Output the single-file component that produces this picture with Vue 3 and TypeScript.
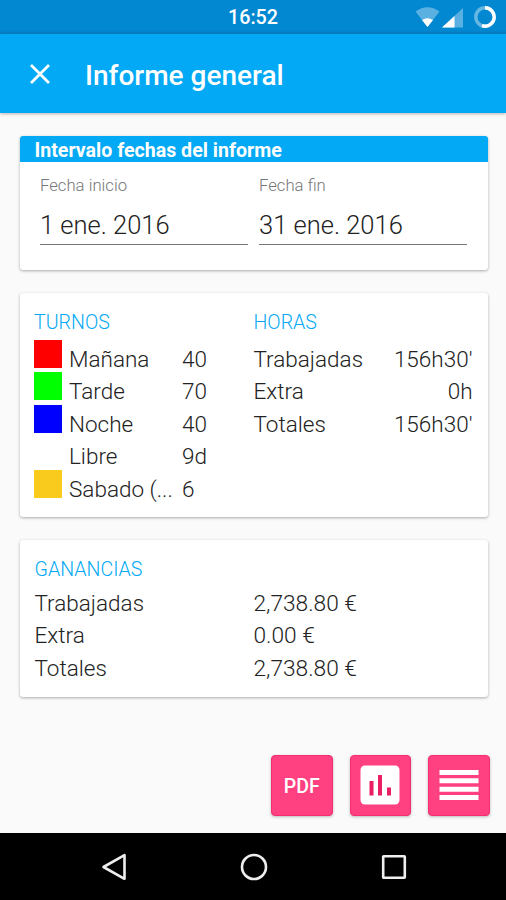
<script setup lang="ts">
interface Shift {
  name: string
  color: string
  value: string
}
interface Entry {
  name: string
  value: string
}

const dates: Entry[] = [
  { name: 'Fecha inicio', value: '1 ene. 2016' },
  { name: 'Fecha fin', value: '31 ene. 2016' },
]
const shifts: Shift[] = [
  { name: 'Mañana', color: '#ff0000', value: '40' },
  { name: 'Tarde', color: '#00ff00', value: '70' },
  { name: 'Noche', color: '#0000ff', value: '40' },
  { name: 'Libre', color: 'transparent', value: '9d' },
  { name: 'Sabado (...', color: '#f9cb1c', value: '6' },
]
const hours: Entry[] = [
  { name: 'Trabajadas', value: "156h30'" },
  { name: 'Extra', value: '0h' },
  { name: 'Totales', value: "156h30'" },
]
const earnings: Entry[] = [
  { name: 'Trabajadas', value: '2,738.80 €' },
  { name: 'Extra', value: '0.00 €' },
  { name: 'Totales', value: '2,738.80 €' },
]
</script>

<template>
  <div class="screen">
    <div class="status">
      <span class="clock">16:52</span>
      <svg class="indicators" width="84" height="28" viewBox="0 0 84 28">
        <path d="M.5 11.500Q12.500 3 24.500 11.500L12.500 27Z" fill="#fff" fill-opacity=".35" />
        <path d="M7 20Q12.500 16.500 18 20L12.500 27Z" fill="#fff" />
        <path d="M27 27.500L48 8V27.500Z" fill="#fff" fill-opacity=".35" />
        <path d="M27 27.500L39.500 16V27.500Z" fill="#fff" />
        <circle cx="70" cy="17" r="9.200" fill="none" stroke="#fff" stroke-opacity=".4" stroke-width="3.400" />
        <path d="M70 7.800A9.200 9.200 0 1 1 67 25.700" fill="none" stroke="#fff" stroke-width="3.400" />
      </svg>
    </div>
    <header class="appbar">
      <svg class="close" width="20" height="20" viewBox="0 0 20 20">
        <path d="M1 1L19 19M19 1L1 19" stroke="#fff" stroke-width="2.700" />
      </svg>
      <h1>Informe general</h1>
    </header>

    <main>
      <section class="card interval">
        <h2>Intervalo fechas del informe</h2>
        <div class="dates">
          <div v-for="d in dates" :key="d.name" class="date">
            <label>{{ d.name }}</label>
            <div class="field">{{ d.value }}</div>
          </div>
        </div>
      </section>

      <section class="card summary">
        <div class="column">
          <h3 class="turnos">TURNOS</h3>
          <div v-for="s in shifts" :key="s.name" class="row">
            <span class="swatch" :style="{ background: s.color }"></span>
            <span class="shift">{{ s.name }}</span>
            <span>{{ s.value }}</span>
          </div>
        </div>
        <div class="column">
          <h3>HORAS</h3>
          <div v-for="h in hours" :key="h.name" class="row spread">
            <span>{{ h.name }}</span>
            <span>{{ h.value }}</span>
          </div>
        </div>
      </section>

      <section class="card earnings">
        <h3>GANANCIAS</h3>
        <div v-for="e in earnings" :key="e.name" class="row">
          <span class="concept">{{ e.name }}</span>
          <span class="amount">{{ e.value }}</span>
        </div>
      </section>
    </main>

    <div class="actions">
      <button>PDF</button>
      <button>
        <svg width="40" height="40" viewBox="0 0 40 40">
          <rect x=".5" y=".5" width="39" height="39" rx="4.500" fill="#fff" />
          <path d="M11.500 16V30.500M20 10V30.500M29 22.500V30.500" stroke="#e91e63" stroke-width="4" />
        </svg>
      </button>
      <button>
        <svg width="40" height="32" viewBox="0 0 40 32">
          <path d="M.5 3.500H39.500M.5 11.800H39.500M.5 20.200H39.500M.5 28.500H39.500" stroke="#fff" stroke-width="5" />
        </svg>
      </button>
    </div>

    <nav>
      <svg width="26" height="28" viewBox="0 0 26 28">
        <path d="M2.500 14L23.500 2.200V25.800Z" fill="none" stroke="#eee" stroke-width="2.600" stroke-linejoin="round" />
      </svg>
      <svg width="28" height="28" viewBox="0 0 28 28">
        <circle cx="14" cy="14" r="12" fill="none" stroke="#eee" stroke-width="2.600" />
      </svg>
      <svg width="26" height="28" viewBox="0 0 26 28">
        <rect x="2.200" y="3.200" width="21.600" height="21.600" rx=".5" fill="none" stroke="#eee" stroke-width="2.600" />
      </svg>
    </nav>
  </div>
</template>

<style>
body {
  margin: 0;
}
</style>

<style scoped>
* {
  box-sizing: border-box;
}
.screen {
  display: flex;
  flex-direction: column;
  width: 506px;
  height: 900px;
  overflow: hidden;
  background: #fafafa;
  color: #222;
  font-family: Roboto, 'Liberation Sans', sans-serif;
}
.status {
  display: grid;
  grid-template-columns: 1fr 52px 1fr;
  flex: none;
  height: 34px;
  background: linear-gradient(#0288d1 30px, #027cc0);
  color: #fff;
}
.clock {
  grid-column: 2;
  align-self: center;
  padding-top: 2px;
  font-size: 19.700px;
  font-weight: 500;
  line-height: 28px;
  text-align: center;
}
.indicators {
  justify-self: end;
  margin-right: 7px;
}
.appbar {
  display: flex;
  flex: none;
  align-items: center;
  gap: 35px;
  height: 79px;
  padding: 1px 30px 0;
  background: #03a9f4;
  box-shadow: 0 1px 3px rgba(0, 0, 0, 0.28);
  color: #fff;
}
h1,
h2,
h3 {
  margin: 0;
}
h1 {
  padding-top: 3px;
  font-size: 28px;
  font-weight: 500;
}
main {
  display: flex;
  flex: 1;
  flex-direction: column;
  gap: 23px;
  padding: 23px 18.500px 0 20px;
}
.card {
  flex: none;
  border-radius: 3px;
  background: #fff;
  box-shadow: 0 1px 3px rgba(0, 0, 0, 0.32);
}
.interval {
  height: 134px;
  overflow: hidden;
}
h2 {
  height: 26px;
  padding-left: 14.500px;
  background: #03a9f4;
  color: #fff;
  font-size: 19.600px;
  font-weight: 700;
  line-height: 29.500px;
}
.dates {
  display: flex;
  gap: 11px;
  padding: 12px 20px 0;
}
.date {
  width: 208px;
}
label {
  display: block;
  height: 24px;
  color: #777;
  font-size: 16.700px;
  font-weight: 300;
  line-height: 24px;
}
.field {
  height: 46px;
  border-bottom: 1.500px solid #777;
  padding-top: 1px;
  font-size: 25.500px;
  font-weight: 300;
  line-height: 52px;
  height: 46.500px;
}
.summary {
  display: grid;
  grid-template-columns: 219.500px 219px;
  height: 224px;
  padding: 15px 14px 0;
}
h3 {
  height: 32px;
  color: #03a9f4;
  font-size: 19.600px;
  font-weight: 300;
  line-height: 29px;
}
.row {
  display: flex;
  height: 32.400px;
  font-size: 22.500px;
  font-weight: 300;
  line-height: 38.600px;
  white-space: nowrap;
}
.swatch {
  width: 28px;
  height: 28px;
  margin-right: 7px;
}
.shift {
  width: 113px;
}
.spread {
  justify-content: space-between;
}
.earnings {
  height: 157px;
  padding: 14px 14.500px 0;
}
.earnings h3 {
  height: 31px;
  line-height: 31px;
}
.earnings .row {
  line-height: 37.500px;
}
.concept {
  width: 219px;
}
.amount {
  font-size: 22.700px;
}
.actions {
  display: flex;
  flex: none;
  justify-content: flex-end;
  gap: 17px;
  padding: 0 16.500px 17px;
}
button {
  display: flex;
  align-items: center;
  justify-content: center;
  width: 61.500px;
  height: 61.500px;
  padding: 0;
  border: 1px solid #f52d74;
  border-radius: 4px;
  background: #ff4081;
  box-shadow: 0 1px 3px rgba(0, 0, 0, 0.25);
  color: #fff;
  font-family: inherit;
  font-size: 19.500px;
  font-weight: 500;
}
button:first-child {
  padding-top: 2px;
}
nav {
  display: flex;
  flex: none;
  align-items: center;
  justify-content: space-between;
  height: 67px;
  padding: 0 99px 0 101px;
  background: #000;
}
</style>
